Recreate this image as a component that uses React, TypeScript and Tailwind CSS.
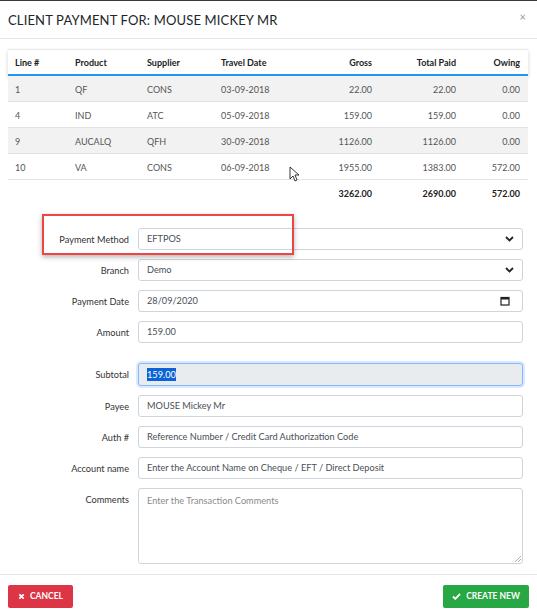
import React from 'react';

const rows = [
  { line: '1', product: 'QF', supplier: 'CONS', date: '03-09-2018', gross: '22.00', paid: '22.00', owing: '0.00' },
  { line: '4', product: 'IND', supplier: 'ATC', date: '05-09-2018', gross: '159.00', paid: '159.00', owing: '0.00' },
  { line: '9', product: 'AUCALQ', supplier: 'QFH', date: '30-09-2018', gross: '1126.00', paid: '1126.00', owing: '0.00' },
  { line: '10', product: 'VA', supplier: 'CONS', date: '06-09-2018', gross: '1955.00', paid: '1383.00', owing: '572.00' },
];

const cols = 'grid grid-cols-[60px_72px_74px_76px_90px_84px_64px]';

const Chevron = () => (
  <svg width="9" height="6" viewBox="0 0 9 6" className="text-[#222]">
    <path d="M1 1l3.5 3.5L8 1" fill="none" stroke="currentColor" strokeWidth="1.8" />
  </svg>
);

const Calendar = () => (
  <svg width="10" height="10" viewBox="0 0 10 10" className="text-[#222]">
    <rect x="1" y="1.5" width="8" height="7.5" fill="none" stroke="currentColor" strokeWidth="1.2" />
    <rect x="1" y="1.5" width="8" height="2" fill="currentColor" />
  </svg>
);

const inputBase =
  'h-[22px] w-full rounded-[3px] border border-[#ced4da] bg-white px-[8px] flex items-center text-[9.2px] text-[#495057]';

const Label = ({ children }: { children: React.ReactNode }) => (
  <div className="h-[22px] flex items-center justify-end pt-[1px] text-[9.2px] text-[#333]">{children}</div>
);

export default function App() {
  return (
    <div className="w-[537px] h-[616px] bg-white overflow-hidden relative font-['Lato',sans-serif]">
      <div className="h-[1px] bg-[#3a3a3a]" />

      {/* Header */}
      <div className="h-[38px] border-b border-[#e6e6e6] flex items-center justify-between pl-[8px] pr-[11px]">
        <h2 className="text-[13px] text-[#212529] tracking-[0.15px] pt-[2px]">CLIENT PAYMENT FOR: MOUSE MICKEY MR</h2>
        <span className="text-[11px] text-[#999] -mt-[4px]">×</span>
      </div>

      {/* Table */}
      <div className="pl-[8px] pr-[9px] pt-[10px]">
        <div className="text-[9px]">
          <div className={`${cols} h-[27px] items-center pt-[2px] border-t border-[#e8e8e8] border-b-2 border-b-[#2196f3] shadow-[0_2px_4px_rgba(0,0,0,0.18)] font-bold text-[#222]`}>
            <div className="pl-[7px]">Line #</div>
            <div className="pl-[7px]">Product</div>
            <div className="pl-[7px]">Supplier</div>
            <div className="pl-[7px]">Travel Date</div>
            <div className="pr-[8px] text-right">Gross</div>
            <div className="pr-[8px] text-right">Total Paid</div>
            <div className="pr-[8px] text-right">Owing</div>
          </div>
          {rows.map((r, i) => (
            <div
              key={r.line}
              className={`${cols} h-[26px] items-center pt-[2px] border-b border-[#e2e2e2] text-[#555] ${i % 2 === 0 ? 'bg-[#f2f2f2]' : 'bg-white'}`}
            >
              <div className="pl-[7px]">{r.line}</div>
              <div className="pl-[7px]">{r.product}</div>
              <div className="pl-[7px]">{r.supplier}</div>
              <div className="pl-[7px]">{r.date}</div>
              <div className="pr-[8px] text-right">{r.gross}</div>
              <div className="pr-[8px] text-right">{r.paid}</div>
              <div className="pr-[8px] text-right">{r.owing}</div>
            </div>
          ))}
          <div className={`${cols} h-[26px] items-center pt-[2px] font-bold text-[#222]`}>
            <div />
            <div />
            <div />
            <div />
            <div className="pr-[8px] text-right">3262.00</div>
            <div className="pr-[8px] text-right">2690.00</div>
            <div className="pr-[8px] text-right">572.00</div>
          </div>
        </div>
      </div>

      {/* Form */}
      <div className="relative pl-[8px] pr-[14px] pt-[22px] grid grid-cols-[121px_1fr] gap-x-[9px] gap-y-[9px]">
        <div className="absolute left-[42px] top-[8px] w-[252px] h-[41px] border-2 border-[#f04545] shadow-[0_2px_5px_rgba(0,0,0,0.3)] pointer-events-none" />

        <Label>Payment Method</Label>
        <div className={`${inputBase} justify-between text-[#222]`}>
          <span>EFTPOS</span>
          <Chevron />
        </div>

        <Label>Branch</Label>
        <div className={`${inputBase} justify-between text-[#222]`}>
          <span>Demo</span>
          <Chevron />
        </div>

        <Label>Payment Date</Label>
        <div className={`${inputBase} justify-between pr-[12px] text-[#222]`}>
          <span>28/09/2020</span>
          <Calendar />
        </div>

        <Label>Amount</Label>
        <div className={`${inputBase} text-[#222]`}>159.00</div>

        <div className="col-span-2 h-[2px]" />

        <Label>Subtotal</Label>
        <div className="h-[23px] w-full rounded-[3px] border border-[#86b7fe] bg-[#e9ecef] shadow-[0_0_0_2px_rgba(13,110,253,0.15)] px-[8px] flex items-center text-[9.2px]">
          <span className="bg-[#0a64d6] text-white">159.00</span>
        </div>

        <Label>Payee</Label>
        <div className={`${inputBase} text-[#222]`}>MOUSE Mickey Mr</div>

        <Label>Auth #</Label>
        <div className={`${inputBase} text-[#8a8a8a]`}>Reference Number / Credit Card Authorization Code</div>

        <Label>Account name</Label>
        <div className={`${inputBase} text-[#8a8a8a]`}>Enter the Account Name on Cheque / EFT / Direct Deposit</div>

        <div className="flex justify-end pt-[5px] text-[9.2px] text-[#333]">Comments</div>
        <div className="relative h-[76px] w-full rounded-[3px] border border-[#ced4da] bg-white px-[8px] pt-[5px] text-[9.2px] text-[#8a8a8a]">
          Enter the Transaction Comments
          <svg width="6" height="6" viewBox="0 0 6 6" className="absolute right-[1px] bottom-[1px] text-[#999]">
            <path d="M6 0L0 6M6 3L3 6" stroke="currentColor" strokeWidth="0.8" />
          </svg>
        </div>
      </div>

      {/* Footer */}
      <div className="mt-[10px] border-t border-[#e6e6e6] pt-[10px] px-[8px] flex justify-between">
        <button className="h-[23px] w-[65px] bg-[#dc3545] rounded-[2px] text-white text-[8.5px] font-bold flex items-center justify-center gap-[5px]">
          <svg width="7" height="7" viewBox="0 0 8 8">
            <path d="M1.5 1.5l5 5M6.5 1.5l-5 5" stroke="white" strokeWidth="2" />
          </svg>
          CANCEL
        </button>
        <button className="h-[23px] w-[86px] bg-[#28a745] rounded-[2px] text-white text-[8.5px] font-bold flex items-center justify-center gap-[5px]">
          <svg width="9" height="7" viewBox="0 0 9 7">
            <path d="M1 3.5l2.3 2.3L8 1" fill="none" stroke="white" strokeWidth="1.8" />
          </svg>
          CREATE NEW
        </button>
      </div>

      {/* mouse pointer */}
      <svg width="11" height="16" viewBox="0 0 11 16" className="absolute left-[289px] top-[166px]">
        <path d="M1 1v12l3-3 2 5 2-1-2-5h4z" fill="white" stroke="#222" strokeWidth="0.9" />
      </svg>
    </div>
  );
}
